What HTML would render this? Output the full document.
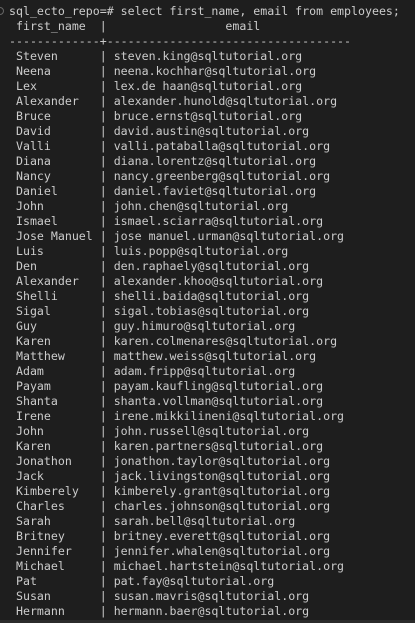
<!DOCTYPE html>
<html><head><meta charset="utf-8"><style>
html,body{margin:0;padding:0;background:#1e1e1e;width:415px;height:623px;overflow:hidden}
pre{margin:0;position:absolute;left:9px;top:4px;font-family:"DejaVu Sans Mono","Liberation Mono",monospace;font-size:11.6px;line-height:15px;color:#cccccc}
.dot{position:absolute;left:-4px;top:7px;width:6px;height:6px;border:1px solid #666;border-radius:50%}
.bot{position:absolute;left:0;right:0;top:620px;height:3px;background:#2b2b2b}
</style></head><body>
<div class="dot"></div>
<pre>sql_ecto_repo=# select first_name, email from employees;
 first_name  |                 email
-------------+-----------------------------------
 Steven      | steven.king@sqltutorial.org
 Neena       | neena.kochhar@sqltutorial.org
 Lex         | lex.de haan@sqltutorial.org
 Alexander   | alexander.hunold@sqltutorial.org
 Bruce       | bruce.ernst@sqltutorial.org
 David       | david.austin@sqltutorial.org
 Valli       | valli.pataballa@sqltutorial.org
 Diana       | diana.lorentz@sqltutorial.org
 Nancy       | nancy.greenberg@sqltutorial.org
 Daniel      | daniel.faviet@sqltutorial.org
 John        | john.chen@sqltutorial.org
 Ismael      | ismael.sciarra@sqltutorial.org
 Jose Manuel | jose manuel.urman@sqltutorial.org
 Luis        | luis.popp@sqltutorial.org
 Den         | den.raphaely@sqltutorial.org
 Alexander   | alexander.khoo@sqltutorial.org
 Shelli      | shelli.baida@sqltutorial.org
 Sigal       | sigal.tobias@sqltutorial.org
 Guy         | guy.himuro@sqltutorial.org
 Karen       | karen.colmenares@sqltutorial.org
 Matthew     | matthew.weiss@sqltutorial.org
 Adam        | adam.fripp@sqltutorial.org
 Payam       | payam.kaufling@sqltutorial.org
 Shanta      | shanta.vollman@sqltutorial.org
 Irene       | irene.mikkilineni@sqltutorial.org
 John        | john.russell@sqltutorial.org
 Karen       | karen.partners@sqltutorial.org
 Jonathon    | jonathon.taylor@sqltutorial.org
 Jack        | jack.livingston@sqltutorial.org
 Kimberely   | kimberely.grant@sqltutorial.org
 Charles     | charles.johnson@sqltutorial.org
 Sarah       | sarah.bell@sqltutorial.org
 Britney     | britney.everett@sqltutorial.org
 Jennifer    | jennifer.whalen@sqltutorial.org
 Michael     | michael.hartstein@sqltutorial.org
 Pat         | pat.fay@sqltutorial.org
 Susan       | susan.mavris@sqltutorial.org
 Hermann     | hermann.baer@sqltutorial.org</pre>
<div class="bot"></div>
</body></html>
